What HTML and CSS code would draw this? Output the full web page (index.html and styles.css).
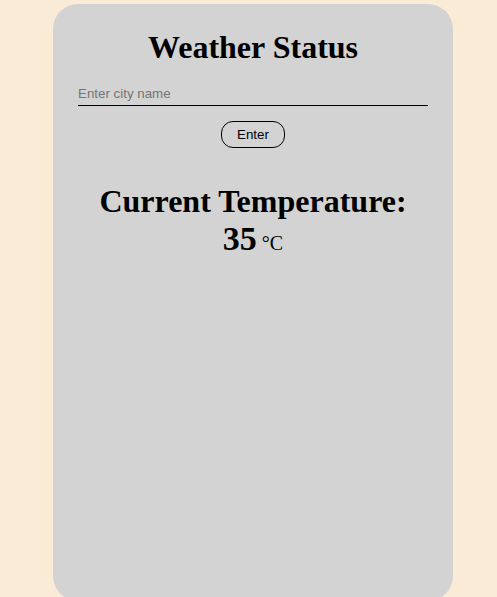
FILE: index.html
```html
<!DOCTYPE html>
<html>
<head>
<meta charset="utf-8">
<link rel="stylesheet" href="styles.css">
</head>
<body>
<main class="card">
  <h1 class="title">Weather Status</h1>
  <input class="city" type="text" placeholder="Enter city name" autofocus>
  <button class="enter">Enter</button>
  <h1 class="temp">Current Temperature:<br><span class="value">35</span><span class="unit">°C</span></h1>
</main>
</body>
</html>
```
FILE: styles.css
```css
html, body {
  margin: 0;
  background: #faebd7;
}
body {
  padding: 4px 0 0 53px;
  font-family: "Liberation Serif", serif;
}
.card {
  box-sizing: border-box;
  width: 400px;
  height: 597px;
  background: #d3d3d3;
  border-radius: 25px;
  display: flex;
  flex-direction: column;
  align-items: center;
}
.title {
  font-size: 32px;
  font-weight: bold;
  margin: 25px 0 19px;
  line-height: 37px;
}
.city {
  width: 350px;
  box-sizing: border-box;
  height: 21px;
  border: none;
  border-bottom: 1px solid #000;
  background: transparent;
  padding: 0 0 4px;
  font-family: "Liberation Sans", Arial, sans-serif;
  font-size: 13.33px;
  outline: none;
  caret-color: #000;
}
.city::placeholder {
  color: #757575;
}
.enter {
  margin-top: 15px;
  height: 27px;
  padding: 0 15px;
  border: 1px solid #000;
  border-radius: 12px;
  background: transparent;
  font-family: "Liberation Sans", Arial, sans-serif;
  font-size: 13.33px;
  color: #000;
}
.temp {
  font-size: 32px;
  font-weight: bold;
  text-align: center;
  margin: 35px 0 0;
  line-height: 37px;
}
.value {
  font-size: 34px;
  line-height: 37px;
}
.unit {
  font-size: 20px;
  font-weight: normal;
  margin-left: 5px;
}
```
